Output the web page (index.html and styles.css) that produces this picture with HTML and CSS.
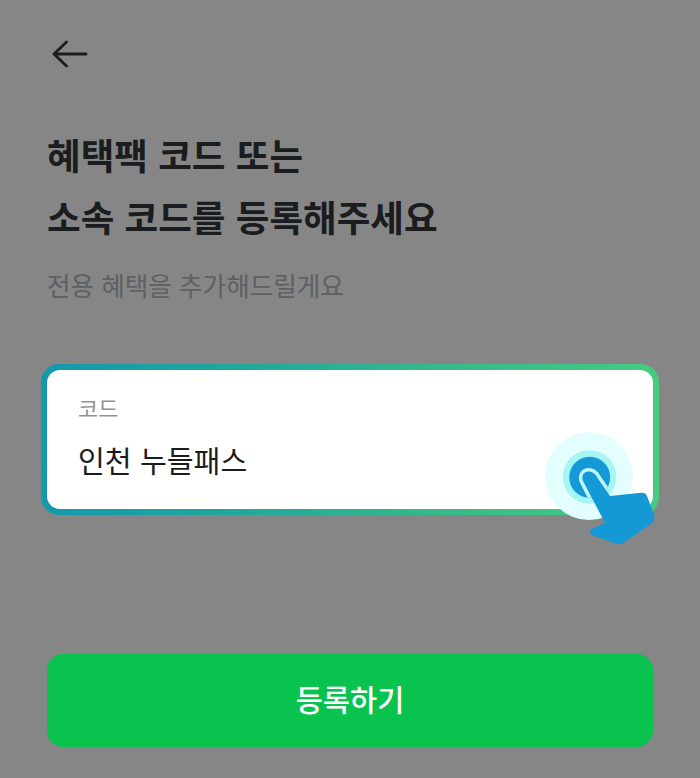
FILE: index.html
```html
<!DOCTYPE html>
<html lang="ko">
<head>
<meta charset="UTF-8" />
<meta name="viewport" content="width=device-width, initial-scale=1" />
<title>코드 등록</title>
<link rel="stylesheet" href="styles.css">
</head>
<body>

<div class="page">
  <button class="back" aria-label="뒤로">
    <svg width="36" height="28" viewBox="0 0 36 28" fill="none" stroke="#1a1c20" stroke-width="2.8" stroke-linecap="round" stroke-linejoin="round">
      <path d="M2 14H34M14.5 2L2 14L14.5 26"/>
    </svg>
  </button>

  <h1 class="title">혜택팩 코드 또는<br>소속 코드를 등록해주세요</h1>
  <p class="sub">전용 혜택을 추가해드릴게요</p>

  <div class="field-wrap">
    <div class="field">
      <div class="field-label">코드</div>
      <div class="field-value">인천 누들패스</div>
    </div>
    <!-- 터치 안내 아이콘 -->
    <svg class="touch" width="120" height="126" viewBox="0 0 120 126">
      <defs>
        <clipPath id="dot"><circle cx="49.7" cy="57.3" r="20.5"/></clipPath>
      </defs>
      <circle cx="49" cy="56" r="44" fill="#e4fdfd"/>
      <circle cx="49.5" cy="57" r="26.7" fill="#a6f5f5"/>
      <circle cx="49.7" cy="57.3" r="20.5" fill="#1499d6"/>
      <path clip-path="url(#dot)" d="M48.5 51.5C52.5 51.5 55.5 54 57.5 58L70 76V104H65L43 61C41 56 44 51.5 48.5 51.5Z" fill="none" stroke="#bdf5f8" stroke-width="7"/>
      <path d="M48.5 51.5C52.5 51.5 55.5 54 57.5 58L70 76L101 72.8C104 72.5 106 73.5 107 76L114 95C115 99 114 102 111.5 103.5L84 122.5C81 124.5 78 124.5 75.5 123.5L52 115C49.5 114 49 110 52.5 108.5L65 103L43 61C41 56 44 51.5 48.5 51.5Z" fill="#1499d6"/>
    </svg>
  </div>

  <button class="submit">등록하기</button>
</div>

</body>
</html>
```

FILE: styles.css
```css
* {
  box-sizing: border-box;
}
html, body {
  margin: 0;
  padding: 0;
}
body {
  background: #868686;
  font-family: "Noto Sans CJK KR", "Noto Sans", sans-serif;
  color: #1a1c20;
}
.page {
  display: flex;
  flex-direction: column;
  height: 778px;
  padding: 40px 47px 31px;
  overflow: hidden;
}
.back {
  align-self: flex-start;
  display: block;
  width: 36px;
  height: 28px;
  margin-left: 5px;
  padding: 0;
  background: none;
  border: none;
}
.back svg {
  display: block;
}
.title {
  margin: 56px 0 0;
  font-size: 36.6px;
  font-weight: 700;
  line-height: 62px;
}
.sub {
  margin: 19px 0 0;
  font-size: 25.6px;
  line-height: 36px;
  color: #5d6064;
}
.field-wrap {
  position: relative;
  margin: 61px -6px 0;
  padding: 6px;
  border-radius: 18px;
  background: linear-gradient(92deg, #1597ad 0%, #22a99a 35%, #36ba8a 65%, #46cc80 100%);
}
.field {
  height: 139px;
  padding: 22px 31px;
  background: #fff;
  border-radius: 13px;
}
.field-label {
  font-size: 22px;
  line-height: 30px;
  color: #8e9196;
}
.field-value {
  margin-top: 16px;
  font-size: 29.2px;
  line-height: 42px;
  color: #1a1c20;
}
.touch {
  position: absolute;
  left: 499px;
  top: 56px;
  overflow: visible;
}
.submit {
  display: block;
  width: 100%;
  height: 93px;
  margin-top: auto;
  padding: 0 0 5px;
  background: #0ac34f;
  border: none;
  border-radius: 16px;
  font-family: inherit;
  font-size: 29.5px;
  font-weight: 500;
  color: #fff;
}
```
